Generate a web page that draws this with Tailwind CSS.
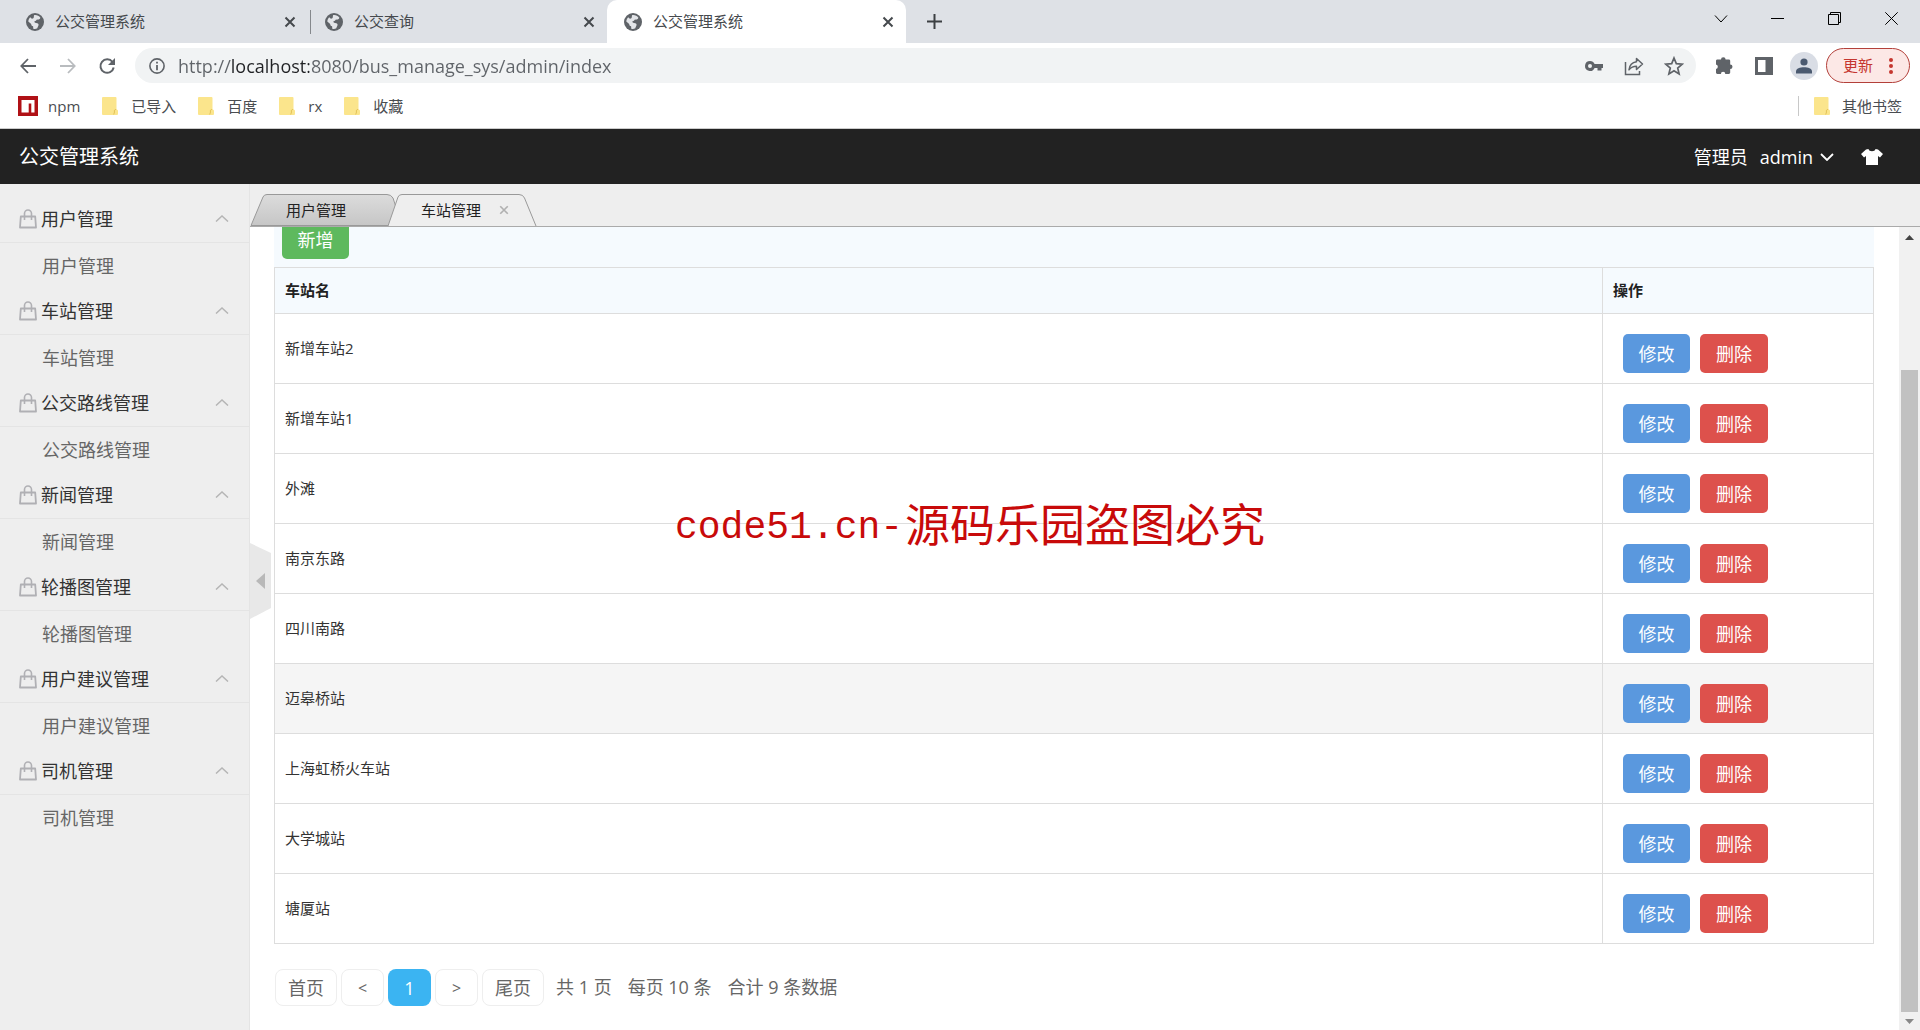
<!DOCTYPE html>
<html lang="zh-CN">
<head>
<meta charset="utf-8">
<title>公交管理系统</title>
<script src="https://cdn.jsdelivr.net/npm/@tailwindcss/browser@4"></script>
</head>
<body class="flex h-screen flex-col overflow-hidden bg-white font-['Open_Sans','Noto_Sans_CJK_SC',sans-serif] text-[15px] text-[#333]">

<svg class="hidden">
  <symbol id="globe" viewBox="0 0 18 18"><circle cx="9" cy="9" r="9" fill="#5f6368"/><path d="M8 2.200c2.500-.5 5 .6 6.400 2.500-.7 1.800-2 2.100-3.200 1.900-.9-.1-.7 1.400-1.900 1.500-1.300.2-1.100 1.300-.2 1.600 1.400.4 3 .2 3.400 1.500.4 1.500-1 2.300-1.200 4.100-1.200.7-3 .7-4 .4l-.2-2.400c-1.500-.2-1.900-1.300-1.900-2.300L2.300 8.600C2.500 7 3 5.500 4.200 4.300l1.300 1.300c1.200.3 2.300-.4 2.300-1.500z" fill="#e3e5e9"/></symbol>
  <symbol id="close" viewBox="0 0 12 12"><path d="M1.500 1.500l9 9M10.500 1.500l-9 9" stroke="currentColor" stroke-width="2" fill="none"/></symbol>
  <symbol id="folder" viewBox="0 0 16 18"><path d="M1 0h12.500a1 1 0 0 1 1 1v11l1.500 1.500V17a1 1 0 0 1-1 1H1a1 1 0 0 1-1-1V1a1 1 0 0 1 1-1z" fill="#fbe58c"/><path d="M14 12.500c-1.500 0-2 1-1.500 2.500l-.8 2.500" fill="none" stroke="#e3c257"/></symbol>
  <symbol id="bag" viewBox="0 0 18 20"><path d="M1.800 7.500h14.400l.8 11H1z" fill="none" stroke="#b0b0b4" stroke-width="1.800" stroke-linejoin="round"/><path d="M5.500 11V4.500a3.500 3.500 0 0 1 7 0V11" fill="none" stroke="#b0b0b4" stroke-width="1.600"/></symbol>
</svg>

<div class="flex h-[43px] shrink-0 items-start justify-between bg-[#dee1e6] pl-[9px] text-[#45494d]">
  <div class="flex h-full" id="browser-tabs"></div>
  <div class="flex text-black">
    <button class="flex h-[37px] w-[57px] items-center justify-center" aria-label="搜索标签页"><svg class="h-2 w-3.5" viewBox="0 0 14 8"><path d="M1 .5l6 6.500 6-6.500" fill="none" stroke="currentColor"/></svg></button>
    <button class="flex h-[37px] w-[57px] items-center justify-center" aria-label="最小化"><span class="h-px w-[13px] bg-black"></span></button>
    <button class="flex h-[37px] w-[57px] items-center justify-center" aria-label="还原"><svg class="size-[13px]" viewBox="0 0 13 13" fill="none" stroke="currentColor"><path d="M.5 2.500h10v10H.5zM2.500 2.500v-2h10v10h-2"/></svg></button>
    <button class="flex h-[37px] w-[57px] items-center justify-center" aria-label="关闭"><svg class="size-[13px]" viewBox="0 0 13 13" fill="none" stroke="currentColor"><path d="M.3.3l12.400 12.400M12.700.3L.3 12.700"/></svg></button>
  </div>
</div>

<div class="flex h-[45px] shrink-0 items-center pr-[10px] text-[#5f6368]">
  <button class="flex w-10 justify-end pr-1" aria-label="后退"><svg class="size-4" viewBox="0 0 16 16" fill="none" stroke="currentColor" stroke-width="1.800"><path d="M16 8H1.500M8 1L1.300 8 8 15"/></svg></button>
  <button class="flex w-10 justify-end pr-1 text-[#b9bcbf]" aria-label="前进"><svg class="size-4" viewBox="0 0 16 16" fill="none" stroke="currentColor" stroke-width="1.800"><path d="M0 8h14.500M8 1l6.700 7L8 15"/></svg></button>
  <button class="flex w-10 justify-end pr-1" aria-label="刷新"><svg class="size-[18px]" viewBox="0 0 18 18"><path d="M14.500 5A6.700 6.700 0 1 0 15.700 10.500" fill="none" stroke="currentColor" stroke-width="2"/><path d="M17 1v7h-7z" fill="currentColor"/></svg></button>
  <div class="ml-[15px] flex h-[35px] flex-1 items-center rounded-full bg-[#f1f3f4] pr-[12px] pl-[14px]">
    <svg class="mr-[13px] size-4 shrink-0" viewBox="0 0 16 16"><circle cx="8" cy="8" r="7.100" fill="none" stroke="currentColor" stroke-width="1.600"/><path d="M8 3.800v1.800M8 7v5.200" stroke="currentColor" stroke-width="1.800"/></svg>
    <input class="min-w-0 flex-1 bg-[linear-gradient(90deg,#5f6368_54px,#202124_54px,#202124_131px,#5f6368_131px)] bg-clip-text text-lg text-transparent caret-black outline-none" aria-label="地址" value="http://localhost:8080/bus_manage_sys/admin/index">
    <div class="flex gap-5">
      <svg class="size-5" viewBox="0 0 20 20"><path fill-rule="evenodd" d="M6 5a5 5 0 0 1 4.600 3H19v4h-1.500v2.500h-4V12h-2.900A5 5 0 1 1 6 5zm0 3a2 2 0 1 0 0 4 2 2 0 0 0 0-4z" fill="currentColor"/></svg>
      <svg class="size-5" viewBox="0 0 20 20" fill="none" stroke="currentColor" stroke-width="1.500"><path d="M1.500 6v12.500h14V15"/><path d="M12.500 2.500l6 5.500-6 5.500v-3.300c-3.500 0-5.500 1-7.500 3.600.5-4.500 3-7.300 7.500-8z" stroke-linejoin="round"/></svg>
      <svg class="size-5" viewBox="0 0 20 20"><path d="M10 2l2.300 5.600 6 .5-4.600 3.900 1.400 5.900-5.100-3.200-5.100 3.200L6.300 12 1.700 8.100l6-.5z" fill="none" stroke="currentColor" stroke-width="1.700"/></svg>
    </div>
  </div>
  <div class="ml-[18px] flex items-center gap-5">
    <svg class="size-5" viewBox="0 0 20 20"><path d="M7 3.500a2.300 2.300 0 0 1 4.600 0h3.200c.8 0 1.400.6 1.400 1.400v3.500a2.300 2.300 0 0 1 0 4.600v3.500c0 .8-.6 1.400-1.400 1.400h-3.500a2.200 2.200 0 0 0-4.400 0H3.400c-.8 0-1.400-.6-1.400-1.400v-3.400a2.300 2.300 0 0 0 0-4.500V4.900c0-.8.6-1.400 1.400-1.400z" fill="currentColor"/></svg>
    <svg class="size-5" viewBox="0 0 20 20"><path fill-rule="evenodd" d="M1 1h18v18H1zM4 4v12h7.500V4z" fill="currentColor"/></svg>
  </div>
  <div class="ml-4 flex size-7 items-center justify-center rounded-full bg-[#d9dde5] text-[#4b5a70]"><svg class="size-4" viewBox="0 0 16 16" fill="currentColor"><circle cx="8" cy="4" r="3.600"/><path d="M0 15.500v-2C0 10.500 4 9.300 8 9.300s8 1.200 8 4.200v2z"/></svg></div>
  <button class="ml-2 flex h-[35px] w-[84px] items-center justify-between rounded-full border border-[#b3403a] bg-[#fce8e6] px-4 text-[#c5362f]">更新<svg class="h-4 w-1" viewBox="0 0 4 16" fill="currentColor"><circle cx="2" cy="2" r="2"/><circle cx="2" cy="8" r="2"/><circle cx="2" cy="14" r="2"/></svg></button>
</div>

<div class="flex h-[41px] shrink-0 items-center justify-between border-b border-[#ccc] px-[18px] pb-1 text-[#4a4d51]">
  <div class="flex gap-[22px]">
    <a href="#" class="flex items-center gap-[10px]"><svg class="size-5" viewBox="0 0 20 20"><path d="M0 0h20v20H0z" fill="#b01116"/><path d="M3.500 4h13v12.500h-3.200V7.500h-2.600v9H3.500z" fill="#fff"/></svg>npm</a>
    <a href="#" class="flex items-center gap-[13px]"><svg class="h-[18px] w-4"><use href="#folder"/></svg>已导入</a>
    <a href="#" class="flex items-center gap-[13px]"><svg class="h-[18px] w-4"><use href="#folder"/></svg>百度</a>
    <a href="#" class="flex items-center gap-[13px]"><svg class="h-[18px] w-4"><use href="#folder"/></svg>rx</a>
    <a href="#" class="flex items-center gap-[13px]"><svg class="h-[18px] w-4"><use href="#folder"/></svg>收藏</a>
  </div>
  <a href="#" class="flex items-center gap-3"><span class="mr-[3px] h-5 w-px bg-[#c8c8c8]"></span><svg class="h-[18px] w-4"><use href="#folder"/></svg>其他书签</a>
</div>

<header class="flex h-[55px] shrink-0 items-center justify-between bg-[#222] pr-[37px] pl-[19px] text-lg text-white">
  <h1 class="text-xl">公交管理系统</h1>
  <div class="flex items-center">
    <span class="mr-3">管理员</span>
    <button class="mr-[27px] flex items-center gap-[7px]">admin<svg class="h-2 w-3.5" viewBox="0 0 14 8"><path d="M1 1l6 6 6-6" fill="none" stroke="currentColor" stroke-width="1.800"/></svg></button>
    <button aria-label="换肤"><svg class="h-4 w-[22px]" viewBox="0 0 22 16" fill="currentColor"><path d="M7.500 0C8 3 14 3 14.500 0L17 .6 22 5l-3 3.500-2-1.500v9H5V7L3 8.500 0 5 5 .6z"/></svg></button>
  </div>
</header>

<div class="flex min-h-0 flex-1">
  <aside class="w-[250px] shrink-0 border-r border-[#e4e4e4] bg-[#eee] pt-[9px]"><nav id="menu"></nav></aside>

  <div class="relative flex min-w-0 flex-1 flex-col">
    <div class="flex h-[43px] shrink-0 items-end border-b border-[#aaa] bg-[#eee] text-[#222]">
      <button class="relative flex h-8 w-[152px] items-center pl-[36px]">
        <svg class="absolute inset-0 h-full w-full" viewBox="0 0 152 32" preserveAspectRatio="none"><defs><linearGradient id="tab-shade" x2="0" y2="1"><stop stop-color="#dcdcdc"/><stop offset="1" stop-color="#c6c6c6"/></linearGradient></defs><path d="M1 31.500L13 3q1-2.500 4-2.500h120q4 0 6 3.500l9 27.500z" fill="url(#tab-shade)" stroke="#999"/></svg>
        <span class="relative">用户管理</span>
      </button>
      <button class="relative -ml-[15px] flex h-8 w-[150px] items-center gap-[18px] pl-[34px]">
        <svg class="absolute inset-0 h-full w-full" viewBox="0 0 150 32" preserveAspectRatio="none"><path d="M1 32L11 3q1-2.500 4-2.500h117q4 0 5.500 3.500L149 32" fill="#eee" stroke="#999"/></svg>
        <span class="relative">车站管理</span>
        <svg class="relative size-[10px] text-[#b0b0b0]"><use href="#close"/></svg>
      </button>
    </div>

    <div class="flex min-h-0 flex-1">
      <main class="min-w-0 flex-1 overflow-hidden pr-[25px] pl-6">
        <div class="flex h-10 items-end bg-[#f5fafe] pb-2 pl-2">
          <button class="h-[39px] w-[67px] shrink-0 rounded-[5px] bg-[#5eb95e] text-lg text-white">新增</button>
        </div>
        <table class="w-full border-collapse border border-[#ddd]">
          <thead>
            <tr class="h-[46px] bg-[#f5fafe] text-left text-[#222]">
              <th class="border border-[#ddd] px-[10px]">车站名</th>
              <th class="w-[271px] border border-[#ddd] px-[10px]">操作</th>
            </tr>
          </thead>
          <tbody id="stations"></tbody>
        </table>
        <div class="flex items-center gap-1 pt-[25px] pl-px text-lg text-[#666]">
          <button class="h-[37px] w-[62px] rounded-lg border border-[#eee]">首页</button>
          <button class="h-[37px] w-[43px] rounded-lg border border-[#eee] text-base">&lt;</button>
          <button class="h-[37px] w-[43px] rounded-lg bg-[#3bb4f2] text-white">1</button>
          <button class="h-[37px] w-[43px] rounded-lg border border-[#eee] text-base">&gt;</button>
          <button class="h-[37px] w-[62px] rounded-lg border border-[#eee]">尾页</button>
          <p class="flex gap-4 pb-0.5 pl-2"><span>共 1 页</span><span>每页 10 条</span><span>合计 9 条数据</span></p>
        </div>
      </main>
      <div class="flex w-[21px] shrink-0 flex-col items-center bg-[#f1f1f1] pt-2 pb-[6px]">
        <svg class="h-[5px] w-[9px]" viewBox="0 0 9 5"><path d="M0 5L4.500 0 9 5z" fill="#444"/></svg>
        <div class="mt-[130px] w-[17px] flex-1 bg-[#c1c1c1]"></div>
        <svg class="mt-[7px] h-[5px] w-[9px]" viewBox="0 0 9 5"><path d="M0 0l4.500 5L9 0z" fill="#888"/></svg>
      </div>
    </div>

    <button class="absolute top-[359px] left-0 h-[76px] w-[21px]" aria-label="收起菜单"><svg class="h-full w-full" viewBox="0 0 21 76"><path d="M0 0l21 10v55L0 76z" fill="#e8e8e8"/><path d="M6 38l9-8v16z" fill="#b8b8b8"/></svg></button>
  </div>
</div>

<div class="pointer-events-none absolute top-[489px] left-[675px] flex items-center gap-0.5 whitespace-nowrap text-[#c80a0a]">
  <span class="pt-1.5 font-['Liberation_Mono',monospace] text-[38px] leading-[66px]">code51.cn-</span><span class="text-[45px] leading-[66px]">源码乐园盗图必究</span>
</div>

<script>
  const browserTabs = [
    ['公交管理系统', ''],
    ['公交查询', 'before:absolute before:left-0.5 before:top-2.5 before:h-6 before:w-px before:bg-[#85888c]'],
    ['公交管理系统', 'bg-white rounded-t-[10px]']
  ];
  document.getElementById('browser-tabs').innerHTML = browserTabs.map(([title, look]) => `
    <div class="relative flex w-[299px] items-center gap-[11px] pr-3 pl-[17px] ${look}">
      <svg class="size-[18px]"><use href="#globe"/></svg>
      <span class="flex-1">${title}</span>
      <button aria-label="关闭标签页"><svg class="size-3"><use href="#close"/></svg></button>
    </div>`).join('') + `
    <button class="ml-[21px] flex items-center" aria-label="新标签页"><svg class="size-[15px]" viewBox="0 0 15 15"><path d="M7.500 0v15M0 7.500h15" stroke="#3c4043" stroke-width="2"/></svg></button>`;

  const menu = ['用户管理', '车站管理', '公交路线管理', '新闻管理', '轮播图管理', '用户建议管理', '司机管理'];
  document.getElementById('menu').innerHTML = menu.map(name => `
    <section class="text-lg">
      <button class="flex h-[50px] w-full items-center border-b border-[#e4e4e4] pt-0.5 pr-5 pl-[19px] text-left text-[#333]">
        <svg class="mr-1 h-5 w-[18px]"><use href="#bag"/></svg><span class="flex-1">${name}</span>
        <svg class="h-[7px] w-3.5" viewBox="0 0 14 7"><path d="M1 6.500l6-5.500 6 5.500" fill="none" stroke="#b5b5b5" stroke-width="1.500"/></svg>
      </button>
      <a href="#" class="flex h-[42px] items-center pt-1 pl-[42px] text-[#666]">${name}</a>
    </section>`).join('');

  const stations = ['新增车站2', '新增车站1', '外滩', '南京东路', '四川南路', '迈皋桥站', '上海虹桥火车站', '大学城站', '塘厦站'];
  document.getElementById('stations').innerHTML = stations.map(name => `
    <tr class="h-[70px] ${name === '迈皋桥站' ? 'bg-[#f5f5f5]' : ''}">
      <td class="border border-[#ddd] px-[10px]">${name}</td>
      <td class="border border-[#ddd] pt-[10px] pl-5">
        <div class="flex gap-[10px]">
          <button class="h-[39px] w-[67px] rounded-[5px] bg-[#5a98de] text-lg text-white">修改</button>
          <button class="h-[39px] w-[68px] rounded-[5px] bg-[#dd514c] text-lg text-white">删除</button>
        </div>
      </td>
    </tr>`).join('');
</script>
</body>
</html>
